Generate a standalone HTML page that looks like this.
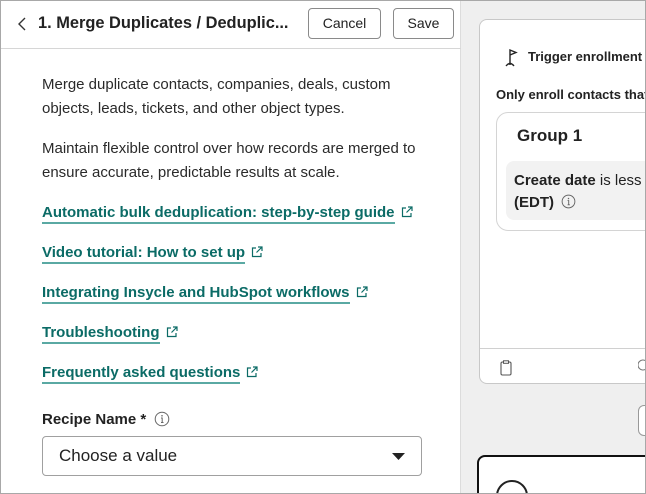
<!DOCTYPE html>
<html><head><meta charset="utf-8"><style>
*{box-sizing:border-box;margin:0;padding:0}
html,body{width:646px;height:494px;overflow:hidden}
body{font-family:"Liberation Sans",sans-serif;background:#efefef;position:relative;color:#1f1f1f}
.wrap{position:absolute;left:0;top:0;width:646px;height:494px;overflow:hidden}
.frame{position:absolute;left:0;top:0;width:646px;height:494px;border:1px solid #a8a8a8;pointer-events:none;z-index:10}
.left{position:absolute;left:0;top:0;width:461px;height:494px;background:#fff;border-right:1px solid #dcdcdc}
.hdr{position:absolute;left:0;top:0;width:461px;height:49px;border-bottom:1px solid #d6d6d6}
.title{position:absolute;left:38px;top:14px;font-size:16.4px;font-weight:bold;color:#222}
.back{position:absolute;left:16px;top:16px}
.btn{position:absolute;top:8px;height:31px;border:1px solid #8a8a8a;border-radius:4px;font-size:14px;text-align:center;line-height:29px;color:#222;background:#fff}
.p{position:absolute;left:42px;font-size:15px;line-height:24px;color:#2a2a2a;white-space:nowrap}
.lk{position:absolute;left:42px;font-size:15px;font-weight:bold;color:#0b6b66;white-space:nowrap}
.lk span{border-bottom:2px solid #5aa9a3;padding-bottom:1px}
.lk svg{margin-left:6px;vertical-align:-1px}
.lbl{position:absolute;left:42px;top:411px;font-size:15px;font-weight:bold;color:#222}
.sel{position:absolute;left:42px;top:436px;width:380px;height:40px;border:1px solid #a0a0a0;border-radius:4px;font-size:17px;line-height:38px;padding-left:16px;color:#222}
.card{position:absolute;left:479px;top:19px;width:200px;height:365px;background:#fff;border:1px solid #c8c8c8;border-radius:8px}
.grp{position:absolute;left:496px;top:112px;width:200px;height:119px;border:1px solid #d4d4d4;border-radius:12px;background:#fff}
.inner{position:absolute;left:506px;top:161px;width:180px;height:59px;background:#f2f2f2;border-radius:8px}
</style></head><body><div class="wrap">
<div class="left">
 <div class="hdr">
  <svg class="back" width="12" height="16" viewBox="0 0 12 16"><path d="M9 2 L3 8 L9 14" fill="none" stroke="#333" stroke-width="1.4"/></svg>
  <div class="title">1. Merge Duplicates / Deduplic...</div>
  <div class="btn" style="left:308px;width:73px">Cancel</div>
  <div class="btn" style="left:393px;width:61px">Save</div>
 </div>
 <div class="p" style="top:73px">Merge duplicate contacts, companies, deals, custom<br>objects, leads, tickets, and other object types.</div>
 <div class="p" style="top:137px">Maintain flexible control over how records are merged to<br>ensure accurate, predictable results at scale.</div>
 <div class="lk" style="top:204px"><span>Automatic bulk deduplication: step-by-step guide</span><svg width="12" height="12" viewBox="0 0 12 12"><path d="M5 2H1.5V10.5H10V7M7 1H11V5M11 1L5.5 6.5" fill="none" stroke="#0b6b66" stroke-width="1.2"/></svg></div>
 <div class="lk" style="top:244px"><span>Video tutorial: How to set up</span><svg width="12" height="12" viewBox="0 0 12 12"><path d="M5 2H1.5V10.5H10V7M7 1H11V5M11 1L5.5 6.5" fill="none" stroke="#0b6b66" stroke-width="1.2"/></svg></div>
 <div class="lk" style="top:284px"><span>Integrating Insycle and HubSpot workflows</span><svg width="12" height="12" viewBox="0 0 12 12"><path d="M5 2H1.5V10.5H10V7M7 1H11V5M11 1L5.5 6.5" fill="none" stroke="#0b6b66" stroke-width="1.2"/></svg></div>
 <div class="lk" style="top:324px"><span>Troubleshooting</span><svg width="12" height="12" viewBox="0 0 12 12"><path d="M5 2H1.5V10.5H10V7M7 1H11V5M11 1L5.5 6.5" fill="none" stroke="#0b6b66" stroke-width="1.2"/></svg></div>
 <div class="lk" style="top:364px"><span>Frequently asked questions</span><svg width="12" height="12" viewBox="0 0 12 12"><path d="M5 2H1.5V10.5H10V7M7 1H11V5M11 1L5.5 6.5" fill="none" stroke="#0b6b66" stroke-width="1.2"/></svg></div>
 <div class="lbl">Recipe Name * <svg width="16" height="16" viewBox="0 0 16 16" style="vertical-align:-3px;margin-left:4px"><circle cx="8" cy="8" r="6.8" fill="none" stroke="#666" stroke-width="1"/><path d="M7 7H8.2V11.5M7 11.5H9.5" fill="none" stroke="#666" stroke-width="1"/><circle cx="8" cy="4.8" r=".8" fill="#666"/></svg></div>
 <div class="sel">Choose a value<svg style="position:absolute;right:16px;top:16px" width="13" height="8" viewBox="0 0 13 8"><path d="M0 0H13L6.5 7Z" fill="#222"/></svg></div>
</div>
<div class="card">
 <div style="position:absolute;left:0;right:0;top:328px;border-top:1px solid #d0d0d0"></div>
 <svg style="position:absolute;left:20px;top:340px" width="12" height="16" viewBox="0 0 12 16"><rect x="1" y="2" width="10" height="13" rx="1.5" fill="none" stroke="#555" stroke-width="1.1"/><rect x="3.5" y="0.8" width="5" height="2.5" fill="#fff" stroke="#555" stroke-width="1"/></svg>
</div>
<svg style="position:absolute;left:502px;top:47px" width="18" height="20" viewBox="0 0 18 20"><path d="M8 18V3L14 5.5L8 8" fill="none" stroke="#222" stroke-width="1.4"/><path d="M4 19Q8 14 12 19" fill="none" stroke="#222" stroke-width="1.4"/></svg>
<div style="position:absolute;left:528px;top:49px;font-size:13px;font-weight:bold;white-space:nowrap;color:#222">Trigger enrollment f</div>
<div style="position:absolute;left:496px;top:87px;font-size:13px;font-weight:bold;white-space:nowrap;color:#222">Only enroll contacts that</div>
<div class="grp"></div>
<div style="position:absolute;left:517px;top:126px;font-size:17px;font-weight:bold;color:#222">Group 1</div>
<div class="inner"></div>
<div style="position:absolute;left:514px;top:170px;font-size:15px;line-height:22px;color:#222;white-space:nowrap"><b>Create date</b> is less t<br><b>(EDT)</b> <svg width="15" height="15" viewBox="0 0 16 16" style="vertical-align:-2px;margin-left:3px"><circle cx="8" cy="8" r="6.8" fill="none" stroke="#666" stroke-width="1"/><path d="M7 7H8.2V11.5M7 11.5H9.5" fill="none" stroke="#666" stroke-width="1"/><circle cx="8" cy="4.8" r=".8" fill="#666"/></svg></div>
<svg style="position:absolute;left:638px;top:358px" width="10" height="14" viewBox="0 0 10 14"><path d="M8 3A5 5 0 1 0 8 11" fill="none" stroke="#777" stroke-width="1"/></svg>
<div style="position:absolute;left:638px;top:405px;width:30px;height:31px;border:1px solid #999;border-radius:6px;background:#fff"></div>
<div style="position:absolute;left:477px;top:455px;width:200px;height:60px;border:2.5px solid #111;border-radius:8px;background:#fff"></div>
<div style="position:absolute;left:496px;top:480px;width:32px;height:32px;border:2px solid #222;border-radius:50%"></div>
</div>
<div class="frame"></div>
</body></html>
